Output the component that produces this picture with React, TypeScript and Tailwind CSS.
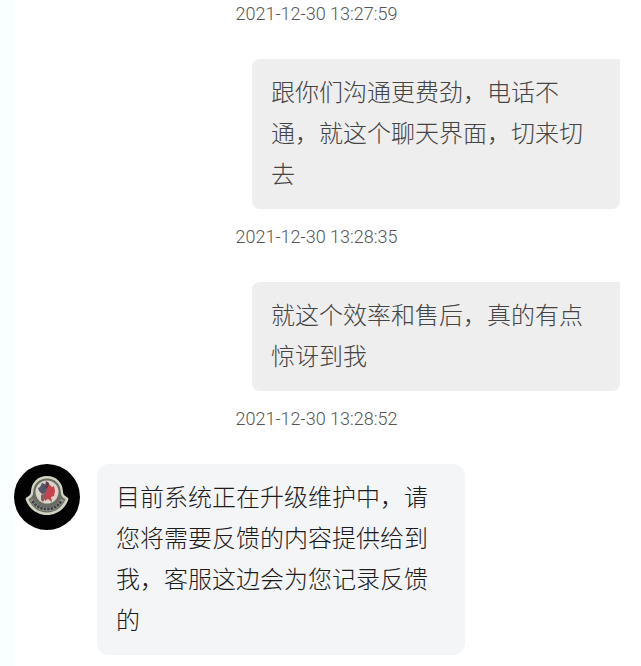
import React from 'react';

type Message = {
  id: number;
  time?: string;
  from: 'me' | 'agent';
  text: string;
};

const messages: Message[] = [
  {
    id: 1,
    time: '2021-12-30 13:27:59',
    from: 'me',
    text: '跟你们沟通更费劲，电话不通，就这个聊天界面，切来切去',
  },
  {
    id: 2,
    time: '2021-12-30 13:28:35',
    from: 'me',
    text: '就这个效率和售后，真的有点惊讶到我',
  },
  {
    id: 3,
    time: '2021-12-30 13:28:52',
    from: 'agent',
    text: '目前系统正在升级维护中，请您将需要反馈的内容提供给到我，客服这边会为您记录反馈的',
  },
];

const Avatar: React.FC = () => (
  <svg viewBox="0 0 66 66" className="h-[66px] w-[66px] shrink-0" role="img" aria-label="客服">
    <circle cx="33" cy="33" r="33" fill="#020202" />
    {/* bell shaped badge */}
    <path
      d="M33 12c-9.500 0-15.500 6.500-16 15.500c0 2.800-1.500 4.500-3.800 5.500c-1.600 .7-2 2-1.200 3.500C15.500 45 23 51 33 51s17.500-6 21-14.500c.8-1.500 .4-2.800-1.200-3.500c-2.300-1-3.800-2.700-3.800-5.500C48.500 18.500 42.500 12 33 12z"
      fill="#d0d5c2"
    />
    <path
      d="M33 14.500c-8 0-13.300 5.300-13.800 13.500c0 3.500-1.700 5.700-4.700 7.200C18 43.500 24.500 48.500 33 48.500s15-5 18.500-13.300c-3-1.500-4.700-3.700-4.700-7.200c-.5-8.200-5.800-13.500-13.800-13.500z"
      fill="#6b6d64"
    />
    <path d="M17.500 35.500c3.500 6.500 8.800 10 15.500 10s12-3.500 15.500-10" fill="none" stroke="#8f938a" strokeWidth="3.500" />
    <path
      d="M18.500 37c3.500 5.500 8.500 8 14.500 8s11-2.500 14.500-8"
      fill="none"
      stroke="#3f4143"
      strokeWidth="2.500"
      strokeDasharray="2.500 1"
    />
    <circle cx="33" cy="28" r="11.500" fill="#d9d4c9" />
    {/* rooster */}
    <path d="M28 19l3 1 2 4-1 5-4 1-3-3-1-3 2-1z" fill="#53566a" />
    <path d="M32 17l3 2 0 5-2 2-2-3z" fill="#5c3d4c" />
    <path d="M35 20l3 3 2-1 1 5-1 5-3 1 1 5-4-3-3 2-1-5 2-5z" fill="#c4434d" />
    <path d="M27 31l4-2 1 4-3 5-2-2z" fill="#8d5862" />
  </svg>
);

const Timestamp: React.FC<{ value: string }> = ({ value }) => (
  <time className="mb-[31px] block pr-2 text-center font-[Roboto,sans-serif] text-lg leading-7 font-light text-[#555]">
    {value}
  </time>
);

const Bubble: React.FC<{ message: Message }> = ({ message }) => {
  if (message.from === 'me') {
    return (
      <div className="flex justify-end pr-[21px] pl-4">
        <p className="w-full max-w-[368px] rounded-lg rounded-tr-xs bg-[#eee] px-[19px] pt-[11px] pb-4 text-[#444]">
          {message.text}
        </p>
      </div>
    );
  }

  return (
    <div className="flex items-start gap-[17px] px-3.5">
      <Avatar />
      <p className="w-full max-w-[368px] rounded-xl bg-[#f4f5f7] px-[19px] pt-[11px] pb-4 text-[#1c1c1c]">
        {message.text}
      </p>
    </div>
  );
};

const App: React.FC = () => {
  return (
    <main
      lang="zh-CN"
      className="min-h-screen bg-linear-to-r from-[#f9ffff] from-[14px] to-white to-[15px] font-['Noto_Sans_CJK_SC',sans-serif] text-2xl leading-[41px] font-light"
    >
      <ol className="flex flex-col gap-3.5">
        {messages.map((message) => (
          <li key={message.id}>
            {message.time && <Timestamp value={message.time} />}
            <Bubble message={message} />
          </li>
        ))}
      </ol>
    </main>
  );
};

export default App;
